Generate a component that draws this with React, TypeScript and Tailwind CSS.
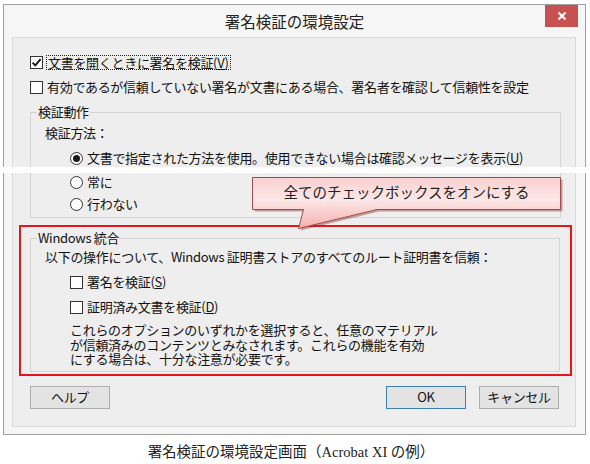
import React from 'react';

function Box({ checked }: { checked?: boolean }) {
  return (
    <span className="w-[13px] h-[13px] border border-[#333] bg-white flex items-center justify-center shrink-0">
      {checked && (
        <svg width="11" height="11" viewBox="0 0 11 11">
          <path d="M1.6 5.6 L4.3 8.4 L9.6 2.2" fill="none" stroke="#111" strokeWidth="1.9" />
        </svg>
      )}
    </span>
  );
}

function Radio({ on }: { on?: boolean }) {
  return (
    <span className="w-[13px] h-[13px] rounded-full border border-[#333] bg-white flex items-center justify-center shrink-0">
      {on && <span className="w-[7px] h-[7px] rounded-full bg-[#1a1a1a]" />}
    </span>
  );
}

function Btn({ label, def }: { label: string; def?: boolean }) {
  return (
    <div
      className={`h-[23px] w-[80px] border flex items-center justify-center bg-[#e3e3e3] ${
        def ? 'border-[#3c7fb1]' : 'border-[#adadad]'
      }`}
    >
      {label}
    </div>
  );
}

export default function App() {
  return (
    <div className="relative w-[590px] h-[464px] bg-white overflow-hidden font-['Noto_Sans_CJK_JP','Liberation_Sans',sans-serif] text-[13px] text-[#111] tracking-[-0.3px]">
      {/* dialog window */}
      <div className="ml-[3px] mt-[4px] w-[583px] h-[431px] border border-[#a0a0a0] bg-[#f6f6f6] flex flex-col">
        {/* title bar */}
        <div className="h-[32px] grid grid-cols-[1fr_auto_1fr]">
          <div />
          <div className="self-center pt-[2px] text-[15.5px] tracking-normal text-[#222]">署名検証の環境設定</div>
          <div className="flex justify-end items-start pr-[7px]">
            <div className="w-[33px] h-[22px] bg-[#c75050] flex items-center justify-center">
              <svg width="10" height="10" viewBox="0 0 10 10">
                <path d="M1.5 1.5 L8.5 8.5 M8.5 1.5 L1.5 8.5" stroke="#fff" strokeWidth="2" />
              </svg>
            </div>
          </div>
        </div>

        {/* content panel */}
        <div className="ml-[8px] mr-[9px] mb-[7px] flex-1 border border-[#dadada] bg-[#eeeeee] flex flex-col pt-[14px]">
          <div className="h-[20px] flex items-center ml-[17px] gap-[3px]">
            <Box checked />
            <span className="border border-dotted border-[#222] leading-[13px] px-[1px]">
              文書を開くときに署名を検証(<span className="underline">V</span>)
            </span>
          </div>
          <div className="h-[20px] mt-[5px] flex items-center ml-[17px] gap-[4px]">
            <Box />
            <span>有効であるが信頼していない署名が文書にある場合、署名者を確認して信頼性を設定</span>
          </div>

          {/* 検証動作 */}
          <fieldset className="mt-[6px] ml-[17px] mr-[14px] border border-[#d4d4d4] px-[6px] pb-[4px]">
            <legend className="px-[1px] leading-[18px]">検証動作</legend>
            <div className="h-[18px] mt-[3px] pl-[8px] flex items-center">検証方法：</div>
            <div className="h-[18px] mt-[7px] pl-[33px] flex items-center gap-[4px]">
              <Radio on />
              <span>
                文書で指定された方法を使用。使用できない場合は確認メッセージを表示(<span className="underline">U</span>)
              </span>
            </div>
            <div className="h-[18px] mt-[6px] pl-[33px] flex items-center gap-[4px]">
              <Radio />
              <span>常に</span>
            </div>
            <div className="h-[18px] mt-[4px] pl-[33px] flex items-center gap-[4px]">
              <Radio />
              <span>行わない</span>
            </div>
          </fieldset>

          {/* Windows 統合 (marked in red) */}
          <div className="mt-[7px] ml-[6px] mr-[3px] border-2 border-[#e8141c] pt-[2px] pb-[2px]">
            <fieldset className="ml-[9px] mr-[10px] border border-[#d4d4d4] px-[6px] pb-[4px]">
              <legend className="px-[1px] leading-[18px]">Windows 統合</legend>
              <div className="h-[18px] mt-[1px] pl-[8px] flex items-center">
                以下の操作について、Windows 証明書ストアのすべてのルート証明書を信頼：
              </div>
              <div className="h-[18px] mt-[7px] pl-[33px] flex items-center gap-[4px]">
                <Box />
                <span>
                  署名を検証(<span className="underline">S</span>)
                </span>
              </div>
              <div className="h-[18px] mt-[7px] pl-[33px] flex items-center gap-[4px]">
                <Box />
                <span>
                  証明済み文書を検証(<span className="underline">D</span>)
                </span>
              </div>
              <p className="mt-[7px] pl-[33px] leading-[14.5px]">
                これらのオプションのいずれかを選択すると、任意のマテリアル
                <br />
                が信頼済みのコンテンツとみなされます。これらの機能を有効
                <br />
                にする場合は、十分な注意が必要です。
              </p>
            </fieldset>
          </div>

          {/* buttons */}
          <div className="mt-[10px] flex items-center ml-[17px] mr-[16px]">
            <Btn label="ヘルプ" />
            <div className="flex-1" />
            <Btn label="OK" def />
            <div className="w-[13px]" />
            <Btn label="キャンセル" />
          </div>
        </div>
      </div>

      {/* caption */}
      <div className="mt-[8px] h-[20px] flex items-center justify-center pr-[8px] font-['Liberation_Serif','Noto_Sans_CJK_JP',serif] text-[14.5px] tracking-normal text-[#222]">
        署名検証の環境設定画面（Acrobat XI の例）
      </div>

      {/* cut line across the screenshot */}
      <div className="absolute left-0 top-[167px] w-[590px] h-[6px] bg-white" />

      {/* callout */}
      <div className="absolute left-[252px] top-[177px] w-[312px] h-[54px]">
        <svg width="312" height="54" viewBox="0 0 312 54" className="absolute left-0 top-0">
          <defs>
            <linearGradient id="cg" x1="0" y1="0" x2="0" y2="51" gradientUnits="userSpaceOnUse">
              <stop offset="0" stopColor="#f9cfcf" />
              <stop offset="0.45" stopColor="#fde7e7" />
              <stop offset="1" stopColor="#f5b0b0" />
            </linearGradient>
          </defs>
          <path d="M2.5 2.5 H310.5 V34.5 H127 L48.5 53.5 L53.5 34.5 H2.5 Z" fill="#8a3a3a" opacity="0.45" />
          <path d="M0.5 0.5 H308.5 V32.5 H125 L46.5 51.5 L51.5 32.5 H0.5 Z" fill="url(#cg)" stroke="#a34a4a" strokeWidth="1" />
        </svg>
        <div className="absolute left-0 top-0 w-[309px] h-[33px] flex items-center justify-center font-['Liberation_Serif','Noto_Sans_CJK_JP',serif] text-[14.5px] tracking-normal text-[#222]">
          全てのチェックボックスをオンにする
        </div>
      </div>
    </div>
  );
}
